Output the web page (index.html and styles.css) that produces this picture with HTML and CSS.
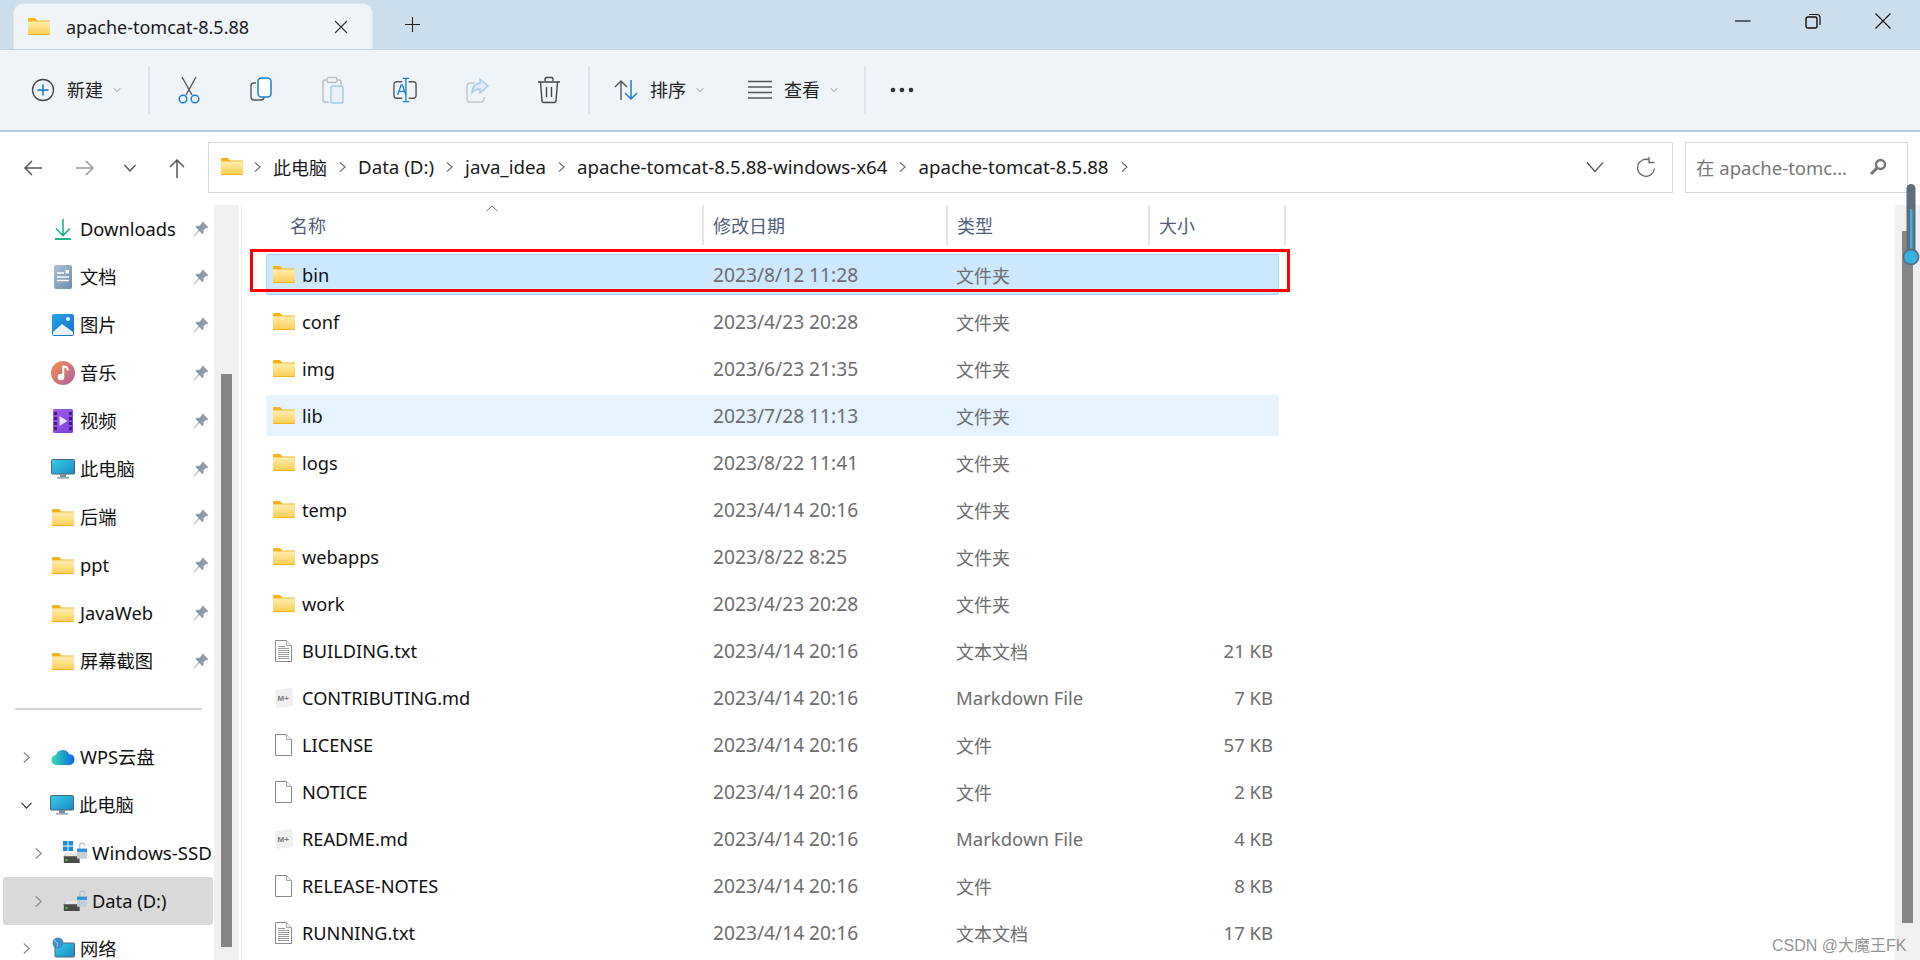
FILE: index.html
```html
<!DOCTYPE html>
<html lang="zh-CN">
<head>
<meta charset="utf-8">
<title>apache-tomcat-8.5.88</title>
<link rel="stylesheet" href="styles.css">
</head>
<body>
<svg class="defs" width="0" height="0" aria-hidden="true">
  <defs>
    <linearGradient id="fg" x1="0" y1="0" x2="0" y2="1"><stop offset="0" stop-color="#ffeeb0"/><stop offset="1" stop-color="#fccf55"/></linearGradient>
    <linearGradient id="pcg" x1="0" y1="0" x2="1" y2="1"><stop offset="0" stop-color="#35d0e6"/><stop offset="1" stop-color="#1d88c8"/></linearGradient>
    <linearGradient id="docg" x1="0" y1="0" x2="1" y2="1"><stop offset="0" stop-color="#a9c0d8"/><stop offset="1" stop-color="#6d8cab"/></linearGradient>
    <linearGradient id="picg" x1="0" y1="0" x2="1" y2="1"><stop offset="0" stop-color="#2aa4ec"/><stop offset="1" stop-color="#0f6fc4"/></linearGradient>
    <linearGradient id="musg" x1="0" y1="0" x2="1" y2="1"><stop offset="0" stop-color="#f29145"/><stop offset="1" stop-color="#b05fa8"/></linearGradient>
    <linearGradient id="vidg" x1="0" y1="0" x2="1" y2="1"><stop offset="0" stop-color="#a45ee8"/><stop offset="1" stop-color="#7a3de0"/></linearGradient>
    <linearGradient id="wpsg" x1="0" y1="0" x2="1" y2="0"><stop offset="0" stop-color="#35e0b0"/><stop offset="1" stop-color="#0a64e0"/></linearGradient>
    <symbol id="folder" viewBox="0 0 22 17">
      <path d="M0 1.2C0 .5.5 0 1.2 0H7l2.5 2.5H22V6H0z" fill="#f5b21a"/>
      <rect y="3" width="22" height="14" rx=".8" fill="#f0aa14"/>
      <rect y="3.4" width="22" height="12.8" fill="url(#fg)"/>
    </symbol>
    <symbol id="txt" viewBox="0 0 17 22">
      <path d="M.5.5h11l5 5v16H.5z" fill="#fff" stroke="#8b8b8b"/>
      <path d="M11.5.5v5h5" fill="#f4f4f4" stroke="#a8a8a8"/>
      <path d="M3 6.5h7M3 8.5h11M3 10.5h11M3 12.5h11M3 14.5h11M3 16.5h11M3 18.5h11" stroke="#9a9a9a"/>
    </symbol>
    <symbol id="blank" viewBox="0 0 17 22">
      <path d="M.5.5h11l5 5v16H.5z" fill="#fff" stroke="#8b8b8b"/>
      <path d="M11.5.5v5h5" fill="#f4f4f4" stroke="#a8a8a8"/>
    </symbol>
    <symbol id="md" viewBox="0 0 20 22">
      <path d="M1 3l17-2 1.500 18L2 21z" fill="#efefef"/>
      <text x="3.500" y="14" class="md-mark">M+</text>
    </symbol>
    <symbol id="pin" viewBox="0 0 16 16">
      <path d="M9.800.6l5.600 5.600-1.300 1.100-1-.5-2.800 2.800c.5 1.500.2 2.800-.7 3.700L6.200 9.900 1.300 15l-.6-.6 5-5L2.400 5.800c.9-.9 2.300-1.200 3.800-.7l2.800-2.800-.5-1z" fill="#8d99a5"/>
    </symbol>
    <symbol id="chev-r" viewBox="0 0 10 14"><path d="M2 1.500L8 7l-6 5.500" fill="none" stroke="currentColor" stroke-width="1.300"/></symbol>
    <symbol id="chev-d" viewBox="0 0 14 10"><path d="M1.500 2L7 8l5.500-6" fill="none" stroke="currentColor" stroke-width="1.300"/></symbol>
    <symbol id="pc" viewBox="0 0 24 20">
      <rect x=".5" y=".5" width="23" height="14.500" rx="1" fill="url(#pcg)" stroke="#47647a"/>
      <rect x="9" y="15" width="6" height="3" fill="#7d8f9c"/>
      <rect x="6" y="18" width="12" height="1.600" fill="#9aa8b2"/>
    </symbol>
    <symbol id="drive" viewBox="0 0 24 14">
      <path d="M4 1h14l2 4v8H1V5z" fill="#4a4a4a"/><path d="M4 1h14l2 4H1z" fill="#e8e8e8"/>
      <rect x="3" y="8.500" width="2.500" height="2" fill="#4be04b"/>
    </symbol>
    <symbol id="lock" viewBox="0 0 11 19">
      <path d="M3 8V4a2.800 2.800 0 015.500 0v1" fill="none" stroke="#b5bfc8" stroke-width="1.400"/>
      <rect y="8" width="11" height="11" rx="1" fill="#c4ced6"/><rect y="8" width="11" height="3.500" fill="#2c93dc"/>
    </symbol>
  </defs>
</svg>

<div class="window">
  <header class="titlebar">
    <div class="tab">
      <svg class="ic-folder"><use href="#folder"/></svg>
      <span class="tab-title">apache-tomcat-8.5.88</span>
      <svg class="tab-close" viewBox="0 0 14 14"><path d="M1 1l12 12M13 1L1 13" stroke="#333" stroke-width="1.100" fill="none"/></svg>
    </div>
    <svg class="tab-new" viewBox="0 0 16 16"><path d="M8 0v16M0 8h16" stroke="#222" stroke-width="1.200"/></svg>
    <div class="winctl">
      <span class="winbtn"><svg viewBox="0 0 16 16"><path d="M0 8h15.500" stroke="#111" stroke-width="1.200"/></svg></span>
      <span class="winbtn"><svg viewBox="0 0 16 16"><rect x="1" y="4" width="11" height="11" rx="2" fill="none" stroke="#111" stroke-width="1.400"/><path d="M4 1.500h8a3 3 0 013 3V12" fill="none" stroke="#111" stroke-width="1.200"/></svg></span>
      <span class="winbtn"><svg viewBox="0 0 16 16"><path d="M.5.500l15 15M15.500.500l-15 15" stroke="#111" stroke-width="1.200" fill="none"/></svg></span>
    </div>
  </header>

  <div class="toolbar">
    <svg class="tool-ic tool-new" viewBox="0 0 24 24"><circle cx="12" cy="12" r="10.500" fill="none" stroke="#444" stroke-width="1.300"/><path d="M12 6.500v11M6.500 12h11" stroke="#0a74c9" stroke-width="1.500"/></svg>
    <span class="tool-label">新建</span>
    <svg class="tool-chev"><use href="#chev-d"/></svg>
    <span class="tool-sep sep-a"></span>

    <span class="tool-btn"><svg viewBox="0 0 24 28"><path d="M5 1l10 18M19 1L9 19" stroke="#555" stroke-width="1.400" fill="none"/><circle cx="6" cy="23" r="3.800" fill="none" stroke="#1a80d0" stroke-width="1.500"/><circle cx="18" cy="23" r="3.800" fill="none" stroke="#1a80d0" stroke-width="1.500"/></svg></span>
    <span class="tool-btn"><svg viewBox="0 0 24 28"><path d="M7 7H5a3 3 0 00-3 3v11a3 3 0 003 3h7a3 3 0 003-3" fill="none" stroke="#555" stroke-width="1.400"/><rect x="9" y="2" width="13" height="19" rx="3.500" fill="#fff" stroke="#1a80d0" stroke-width="1.500"/></svg></span>
    <span class="tool-btn dim"><svg viewBox="0 0 24 28"><path d="M6 4H4a2 2 0 00-2 2v18a2 2 0 002 2h4M16 4h2a2 2 0 012 2v3" fill="none" stroke="#999" stroke-width="1.400"/><rect x="6" y="1.500" width="10" height="5" rx="2" fill="none" stroke="#999" stroke-width="1.300"/><rect x="10" y="10" width="12" height="17" rx="2" fill="#e4f0fa" stroke="#6fb0e0" stroke-width="1.400"/></svg></span>
    <span class="tool-btn tool-rename"><svg viewBox="0 0 26 28"><path d="M10 5H4a3 3 0 00-3 3v12a3 3 0 003 3h6M17 5h5a3 3 0 013 3v12a3 3 0 01-3 3h-5" fill="none" stroke="#555" stroke-width="1.500"/><path d="M14 2v24M10.500 1.500h7M10.500 26.500h7" stroke="#1a80d0" stroke-width="1.400" fill="none"/><path d="M5 19.500L8.800 8.500h1.400l3.800 11M6.500 15.500h6" stroke="#1a80d0" stroke-width="1.400" fill="none"/></svg></span>
    <span class="tool-btn dim"><svg viewBox="0 0 24 28"><path d="M10 7H5a3 3 0 00-3 3v13a3 3 0 003 3h11a3 3 0 003-3v-2" fill="none" stroke="#aaa" stroke-width="1.400"/><path d="M15 3l8 7-8 7v-4c-4 0-6 1-8 4 0-6 3-9 8-10z" fill="#d5e8f8" stroke="#6fb0e0" stroke-width="1.300"/></svg></span>
    <span class="tool-btn"><svg viewBox="0 0 24 28"><path d="M1 6h22M8 5V3a1.500 1.500 0 011.500-1.500h5A1.500 1.500 0 0116 3v2M3.500 6l1.500 19a2 2 0 002 1.500h10a2 2 0 002-1.500l1.500-19M9.500 11v10M14.500 11v10" fill="none" stroke="#444" stroke-width="1.400"/></svg></span>
    <span class="tool-sep sep-b"></span>

    <svg class="tool-ic tool-sort" viewBox="0 0 24 24"><path d="M7 22V3M1 9l6-6 6 6" fill="none" stroke="#555" stroke-width="1.400"/><path d="M17 2v19M11 15l6 6 6-6" fill="none" stroke="#1a80d0" stroke-width="1.500"/></svg>
    <span class="tool-label">排序</span>
    <svg class="tool-chev"><use href="#chev-d"/></svg>
    <svg class="tool-ic tool-view" viewBox="0 0 24 24"><path d="M0 3.500h24M0 9h24M0 14.500h24M0 20h24" stroke="#555" stroke-width="1.300"/></svg>
    <span class="tool-label">查看</span>
    <svg class="tool-chev"><use href="#chev-d"/></svg>
    <span class="tool-sep sep-c"></span>
    <svg class="tool-more" viewBox="0 0 24 6"><circle cx="3" cy="3" r="2.300"/><circle cx="12" cy="3" r="2.300"/><circle cx="21" cy="3" r="2.300"/></svg>
  </div>

  <div class="addrrow">
    <div class="nav">
      <svg viewBox="0 0 20 20"><path d="M19 10H2M9 3l-7 7 7 7" fill="none" stroke="#555" stroke-width="1.500"/></svg>
      <svg class="dim-nav" viewBox="0 0 20 20"><path d="M1 10h17M11 3l7 7-7 7" fill="none" stroke="#999" stroke-width="1.500"/></svg>
      <svg class="nav-drop" viewBox="0 0 14 10"><path d="M1.500 2L7 8l5.500-6" fill="none" stroke="#555" stroke-width="1.500"/></svg>
      <svg viewBox="0 0 20 20"><path d="M10 20V2M3 9l7-7 7 7" fill="none" stroke="#555" stroke-width="1.500"/></svg>
    </div>
    <div class="addr">
      <svg class="ic-folder addr-folder"><use href="#folder"/></svg>
      <svg class="crumb-sep"><use href="#chev-r"/></svg><span>此电脑</span>
      <svg class="crumb-sep"><use href="#chev-r"/></svg><span class="crumb">Data (D:)</span>
      <svg class="crumb-sep"><use href="#chev-r"/></svg><span class="crumb">java_idea</span>
      <svg class="crumb-sep"><use href="#chev-r"/></svg><span class="crumb">apache-tomcat-8.5.88-windows-x64</span>
      <svg class="crumb-sep"><use href="#chev-r"/></svg><span class="crumb">apache-tomcat-8.5.88</span>
      <svg class="crumb-sep"><use href="#chev-r"/></svg>
      <svg class="addr-drop" viewBox="0 0 18 12"><path d="M1 1.500l8 9 8-9" fill="none" stroke="#555" stroke-width="1.200"/></svg>
      <svg class="addr-refresh" viewBox="0 0 20 22"><path d="M13.500 3.500A8.500 8.500 0 1 0 18.500 12M13 .5v5.500h5.500" fill="none" stroke="#666" stroke-width="1.300" transform="translate(0 .5)"/></svg>
    </div>
    <div class="search">
      <span class="search-text">在 apache-tomc...</span>
      <svg class="search-ic" viewBox="0 0 18 18"><circle cx="11.500" cy="6.500" r="4.500" fill="none" stroke="#777" stroke-width="2.400"/><path d="M8 10l-6 6" stroke="#777" stroke-width="3"/></svg>
    </div>
  </div>

  <main class="main">
    <nav class="sidebar">
      <div class="side-list">
        <div class="side-row"><svg class="sic" viewBox="0 0 24 24"><path d="M12 2v16M5 11.500l7 7 7-7" fill="none" stroke="#1cb38e" stroke-width="1.600"/><path d="M4 22h16" stroke="#1cb38e" stroke-width="2"/></svg><span class="side-label">Downloads</span><svg class="pin"><use href="#pin"/></svg></div>
        <div class="side-row"><svg class="sic" viewBox="0 0 24 24"><rect x="3" y="0" width="18" height="24" rx="2" fill="url(#docg)"/><path d="M6 8h7M6 12h12M6 15.500h12" stroke="#fff" stroke-width="1.300"/><rect x="14.500" y="5" width="3.500" height="3.500" fill="#fff"/></svg><span class="side-label">文档</span><svg class="pin"><use href="#pin"/></svg></div>
        <div class="side-row"><svg class="sic" viewBox="0 0 24 24"><rect x="1" y="1" width="22" height="22" rx="2" fill="url(#picg)"/><path d="M2 22v-3l9-8 11 8v3z" fill="#eaf3fb"/><circle cx="17" cy="6" r="2" fill="#fff"/></svg><span class="side-label">图片</span><svg class="pin"><use href="#pin"/></svg></div>
        <div class="side-row"><svg class="sic" viewBox="0 0 24 24"><circle cx="12" cy="12" r="12" fill="url(#musg)"/><circle cx="10" cy="16" r="3.300" fill="#fff"/><path d="M12.300 16V5.500c2.500 0 4.500 1.500 4.500 4" fill="none" stroke="#fff" stroke-width="2"/></svg><span class="side-label">音乐</span><svg class="pin"><use href="#pin"/></svg></div>
        <div class="side-row"><svg class="sic" viewBox="0 0 24 24"><rect x="2" y="0" width="20" height="24" rx="1.500" fill="url(#vidg)"/><path d="M3 3h3v3H3zM3 8h3v3H3zM3 13h3v3H3zM3 18h3v3H3zM18 3h3v3h-3zM18 8h3v3h-3zM18 13h3v3h-3zM18 18h3v3h-3z" fill="#3f1d7a"/><path d="M8.500 7l8 5-8 5z" fill="#e8e0fa"/></svg><span class="side-label">视频</span><svg class="pin"><use href="#pin"/></svg></div>
        <div class="side-row"><svg class="sic" viewBox="0 0 24 20"><use href="#pc"/></svg><span class="side-label">此电脑</span><svg class="pin"><use href="#pin"/></svg></div>
        <div class="side-row"><svg class="sic sic-f"><use href="#folder"/></svg><span class="side-label">后端</span><svg class="pin"><use href="#pin"/></svg></div>
        <div class="side-row"><svg class="sic sic-f"><use href="#folder"/></svg><span class="side-label">ppt</span><svg class="pin"><use href="#pin"/></svg></div>
        <div class="side-row"><svg class="sic sic-f"><use href="#folder"/></svg><span class="side-label">JavaWeb</span><svg class="pin"><use href="#pin"/></svg></div>
        <div class="side-row"><svg class="sic sic-f"><use href="#folder"/></svg><span class="side-label">屏幕截图</span><svg class="pin"><use href="#pin"/></svg></div>
        <div class="side-div"></div>
        <div class="tree-row"><svg class="tw"><use href="#chev-r"/></svg><svg class="sic" viewBox="0 0 24 18"><path d="M6 17a5 5 0 01-1-10 7 7 0 0113-1 5.500 5.500 0 010 11z" fill="url(#wpsg)"/></svg><span class="side-label">WPS云盘</span></div>
        <div class="tree-row"><svg class="tw tw-open"><use href="#chev-d"/></svg><svg class="sic" viewBox="0 0 24 20"><use href="#pc"/></svg><span class="side-label">此电脑</span></div>
        <div class="tree-row nested"><svg class="tw"><use href="#chev-r"/></svg><span class="sic drive-ic"><svg class="drv-win" viewBox="0 0 10 10"><path d="M0 0h4.500v4.500H0zM5.500 0H10v4.500H5.500zM0 5.500h4.500V10H0zM5.500 5.500H10V10H5.500z" fill="#1a8ae0"/></svg><svg class="drv-base"><use href="#drive"/></svg><svg class="drv-lock"><use href="#lock"/></svg></span><span class="side-label label-wide">Windows-SSD</span></div>
        <div class="tree-row nested active"><svg class="tw"><use href="#chev-r"/></svg><span class="sic drive-ic"><svg class="drv-base"><use href="#drive"/></svg><svg class="drv-lock"><use href="#lock"/></svg></span><span class="side-label">Data (D:)</span></div>
        <div class="tree-row last"><svg class="tw"><use href="#chev-r"/></svg><svg class="sic" viewBox="0 0 24 24"><rect x="4" y="6" width="19.500" height="14" rx="1" fill="url(#pcg)" stroke="#47647a"/><circle cx="7" cy="6" r="5.500" fill="#3d8fc9"/><path d="M3 3.500c3 1 4 3 3 6" stroke="#a9d6ee" fill="none"/></svg><span class="side-label">网络</span></div>
      </div>
      <div class="side-track"><div class="side-thumb"></div></div>
    </nav>

    <section class="files">
      <div class="file-head">
        <div class="hcol">名称<svg class="sort-caret" viewBox="0 0 12 7"><path d="M.5 6L6 1l5.500 5" fill="none" stroke="#666"/></svg></div>
        <div class="hcol">修改日期</div>
        <div class="hcol">类型</div>
        <div class="hcol">大小</div>
      </div>
      <div class="file-list">
        <div class="file-row selected"><span class="fname"><svg class="ic-folder"><use href="#folder"/></svg>bin</span><span class="fdate">2023/8/12 11:28</span><span class="fmeta">文件夹</span><span class="fsize"></span></div>
        <div class="file-row"><span class="fname"><svg class="ic-folder"><use href="#folder"/></svg>conf</span><span class="fdate">2023/4/23 20:28</span><span class="fmeta">文件夹</span><span class="fsize"></span></div>
        <div class="file-row"><span class="fname"><svg class="ic-folder"><use href="#folder"/></svg>img</span><span class="fdate">2023/6/23 21:35</span><span class="fmeta">文件夹</span><span class="fsize"></span></div>
        <div class="file-row hover"><span class="fname"><svg class="ic-folder"><use href="#folder"/></svg>lib</span><span class="fdate">2023/7/28 11:13</span><span class="fmeta">文件夹</span><span class="fsize"></span></div>
        <div class="file-row"><span class="fname"><svg class="ic-folder"><use href="#folder"/></svg>logs</span><span class="fdate">2023/8/22 11:41</span><span class="fmeta">文件夹</span><span class="fsize"></span></div>
        <div class="file-row"><span class="fname"><svg class="ic-folder"><use href="#folder"/></svg>temp</span><span class="fdate">2023/4/14 20:16</span><span class="fmeta">文件夹</span><span class="fsize"></span></div>
        <div class="file-row"><span class="fname"><svg class="ic-folder"><use href="#folder"/></svg>webapps</span><span class="fdate">2023/8/22 8:25</span><span class="fmeta">文件夹</span><span class="fsize"></span></div>
        <div class="file-row"><span class="fname"><svg class="ic-folder"><use href="#folder"/></svg>work</span><span class="fdate">2023/4/23 20:28</span><span class="fmeta">文件夹</span><span class="fsize"></span></div>
        <div class="file-row"><span class="fname"><svg class="ic-doc"><use href="#txt"/></svg>BUILDING.txt</span><span class="fdate">2023/4/14 20:16</span><span class="fmeta">文本文档</span><span class="fsize">21 KB</span></div>
        <div class="file-row"><span class="fname"><svg class="ic-md"><use href="#md"/></svg>CONTRIBUTING.md</span><span class="fdate">2023/4/14 20:16</span><span class="fmeta flatin">Markdown File</span><span class="fsize">7 KB</span></div>
        <div class="file-row"><span class="fname"><svg class="ic-doc"><use href="#blank"/></svg>LICENSE</span><span class="fdate">2023/4/14 20:16</span><span class="fmeta">文件</span><span class="fsize">57 KB</span></div>
        <div class="file-row"><span class="fname"><svg class="ic-doc"><use href="#blank"/></svg>NOTICE</span><span class="fdate">2023/4/14 20:16</span><span class="fmeta">文件</span><span class="fsize">2 KB</span></div>
        <div class="file-row"><span class="fname"><svg class="ic-md"><use href="#md"/></svg>README.md</span><span class="fdate">2023/4/14 20:16</span><span class="fmeta flatin">Markdown File</span><span class="fsize">4 KB</span></div>
        <div class="file-row"><span class="fname"><svg class="ic-doc"><use href="#blank"/></svg>RELEASE-NOTES</span><span class="fdate">2023/4/14 20:16</span><span class="fmeta">文件</span><span class="fsize">8 KB</span></div>
        <div class="file-row"><span class="fname"><svg class="ic-doc"><use href="#txt"/></svg>RUNNING.txt</span><span class="fdate">2023/4/14 20:16</span><span class="fmeta">文本文档</span><span class="fsize">17 KB</span></div>
      </div>
    </section>
    <div class="main-track"><div class="main-thumb"></div></div>
  </main>

  <div class="red-box"></div>
  <svg class="slider" viewBox="0 0 20 82"><rect x="5.500" y="0" width="9" height="74" rx="4.500" fill="#5d6f7f"/><rect x="9" y="25" width="2.500" height="50" fill="#35b2e6"/><circle cx="10" cy="73" r="7.500" fill="#35b4e4" stroke="#5d6f7f" stroke-width="1.800"/></svg>
  <div class="watermark">CSDN @大魔王FK</div>
</div>
</body>
</html>
```
FILE: styles.css
```css
* { box-sizing: border-box; }
html, body { margin: 0; padding: 0; height: 100%; overflow: hidden; background: #fff; }
body { font-family: "Noto Sans", "Noto Sans CJK SC", sans-serif; font-size: 18px; color: #111; }
.defs { position: absolute; }
.window { position: relative; width: 1920px; height: 960px; display: flex; flex-direction: column; overflow: hidden; }
svg { display: block; flex: none; }
.md-mark { font: bold 8px "Liberation Sans", sans-serif; fill: #777; }

/* title bar */
.titlebar { height: 49px; background: #ccdeeb; display: flex; align-items: flex-end; flex: none; }
.tab { margin-left: 13px; width: 360px; height: 46px; background: #eff4f9; border: 1px solid #dbe7f1; border-bottom: 0; border-radius: 10px 10px 0 0; display: flex; align-items: center; padding-left: 14px; }
.ic-folder { width: 22px; height: 17px; }
.tab-title { margin-left: 16px; flex: 1; font-size: 18px; color: #1a1a1a; }
.tab-close { width: 14px; height: 14px; margin-right: 24px; }
.tab-new { width: 15px; height: 15px; margin: 0 0 17px 32px; }
.winctl { margin-left: auto; display: flex; align-self: stretch; padding-right: 2px; }
.winbtn { width: 70px; display: flex; align-items: center; justify-content: center; padding-bottom: 8px; }
.winbtn svg { width: 16px; height: 16px; }

/* toolbar */
.toolbar { height: 83px; background: #eff4f9; border-top: 1px solid #c0d2e0; border-bottom: 2px solid #b9cbdb; display: flex; align-items: center; padding-left: 31px; flex: none; }
.tool-ic { width: 24px; height: 24px; }
.tool-label { margin-left: 12px; font-size: 18px; color: #222; line-height: 24px; width: 36px; white-space: nowrap; }
.tool-chev { width: 8px; height: 6px; margin-left: 10px; color: #777; }
.tool-sep { width: 2px; height: 48px; background: #dde3e8; }
.sep-a { margin: 0 3px 0 27px; }
.sep-b { margin: 0 0 0 3px; }
.sep-c { margin: 0 0 0 26px; }
.tool-btn { width: 72px; display: flex; justify-content: center; }
.tool-btn svg { width: 24px; height: 28px; }
.tool-btn.dim svg { opacity: .6; }
.tool-sort { margin-left: 24px; }
.tool-view { margin-left: 44px; }
.tool-more { width: 24px; height: 6px; margin-left: 24px; fill: #333; }

/* address */
.addrrow { height: 73px; display: flex; padding: 10px 12px 12px 7px; flex: none; }
.nav { width: 198px; display: grid; grid-template-columns: 52px 52px 38px 56px; align-items: center; justify-items: center; }
.nav svg { width: 20px; height: 20px; }
.nav .nav-drop { width: 14px; height: 10px; }
.addr { margin-left: 3px; width: 1465px; border: 1px solid #d9d9d9; display: flex; align-items: center; padding: 0 0 2px 12px; color: #1a1a1a; white-space: nowrap; }
.addr-folder { margin-right: -1px; }
.crumb { font-size: 18.7px; }
.crumb-sep { width: 31px; height: 12px; color: #666; padding: 0 11px; }
.addr-drop { width: 18px; height: 12px; margin-left: auto; }
.addr-refresh { width: 20px; height: 22px; margin: 0 16px 0 32px; }
.search { margin-left: 12px; width: 223px; border: 1px solid #d9d9d9; display: flex; align-items: center; padding: 0 20px 2px 10px; color: #777; }
.search-text { flex: 1; white-space: nowrap; overflow: hidden; font-size: 18.5px; }
.search-ic { width: 18px; height: 18px; }

/* main */
.main { flex: 1; display: flex; min-height: 0; }
.sidebar { width: 239px; display: flex; flex: none; }
.side-list { width: 214px; flex: none; overflow: hidden; color: #111; }
.side-row, .tree-row { height: 48px; display: flex; align-items: center; flex: none; }
.side-row { padding-left: 51px; }
.side-label { margin-left: 5px; white-space: nowrap; font-size: 18.3px; padding-bottom: 2px; }
.label-wide { font-size: 18.7px; }
.sic { width: 24px; height: 24px; }
.sic-f { width: 22px; height: 17px; margin: 0 1px; }
.pin { width: 16px; height: 16px; margin-left: auto; margin-right: 5px; }
.side-div { height: 2px; background: #d4d4d4; margin: 23px 12px 23px 15px; }
.tree-row { padding-left: 22px; }
.tw { width: 9px; height: 13px; color: #888; margin-right: 20px; }
.tw-open { width: 13px; height: 9px; color: #333; margin: 0 17px 0 -2px; }
.tree-row.nested { padding-left: 34px; }
.tree-row.active { background: #d9d9d9; border-radius: 3px; margin-left: 3px; padding-left: 31px; width: 210px; }
.tree-row.last { height: 35px; align-items: flex-start; padding-top: 12px; overflow: hidden; }
.tree-row.last .side-label { line-height: 20px; padding: 2px 0 0; }
.tree-row.last .tw { margin-top: 5px; }
.drive-ic { position: relative; display: block; }
.drv-base { position: absolute; left: 0; bottom: 1px; width: 20px; height: 12px; }
.drv-lock { position: absolute; right: 0; top: 0; width: 10px; height: 18px; }
.drv-win { position: absolute; left: 0; top: 0; width: 10px; height: 10px; }
.side-track { width: 25px; background: #f0f0f0; padding-left: 7px; }
.side-thumb { width: 11px; height: 573px; margin-top: 169px; background: #868686; }

.files { flex: 1; margin-left: 2px; border-left: 1px solid #efefef; padding-left: 24px; min-width: 0; }
.file-head { height: 40px; display: grid; grid-template-columns: 438px 244px 202px 136px; margin-bottom: 9px; width: 1020px; }
.hcol { position: relative; padding-left: 9px; color: #4f6078; line-height: 38px; padding-top: 2px; border-right: 2px solid #e5e5e5; font-size: 18px; }
.hcol:first-child { padding-left: 24px; }
.sort-caret { position: absolute; left: 220px; top: 0; width: 12px; height: 7px; }
.file-row { height: 41px; margin-bottom: 6px; width: 1013px; display: grid; grid-template-columns: 438px 243px 202px 123px; align-items: center; border: 1px solid transparent; border-radius: 2px; }
.file-row.selected { background: #cce8ff; border-color: #a8d8ff; border-bottom-color: #99d1ff; }
.file-row.hover { background: #e5f3ff; }
.fname { display: flex; align-items: center; color: #111; white-space: nowrap; padding-left: 6px; font-size: 18.2px; }
.fname .ic-folder { margin-right: 7px; }
.ic-doc { width: 17px; height: 22px; margin: 0 10px 0 2px; }
.ic-md { width: 20px; height: 22px; margin: 0 8px 0 1px; }
.fdate { color: #6d6d6d; padding-left: 8px; white-space: nowrap; font-size: 19.2px; }
.fmeta { color: #6d6d6d; padding-left: 8px; white-space: nowrap; }
.flatin { font-size: 18.5px; }
.fsize { color: #6d6d6d; text-align: right; font-size: 18.5px; white-space: nowrap; }
.main-track { width: 25px; background: #f0f0f0; padding-left: 7px; flex: none; }
.main-thumb { width: 11px; height: 692px; margin-top: 26px; background: #868686; }

/* overlays */
.red-box { position: absolute; left: 250px; top: 249px; width: 1040px; height: 43px; border: 3px solid #f00; }
.slider { position: absolute; left: 1901px; top: 184px; width: 20px; height: 82px; }
.watermark { position: absolute; left: 1772px; top: 932px; font: 16px "Liberation Sans", "Noto Sans CJK SC", sans-serif; color: rgba(110,110,110,.75); white-space: nowrap; }
```
